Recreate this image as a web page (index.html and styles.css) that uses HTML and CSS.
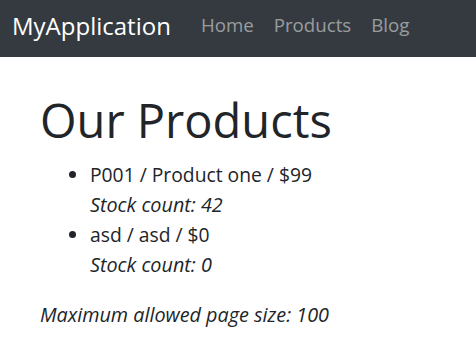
FILE: index.html
```html
<!DOCTYPE html>
<html>
<head>
<meta charset="utf-8">
<link rel="stylesheet" href="styles.css">
</head>
<body>
<nav class="navbar">
  <a class="brand" href="#">MyApplication</a>
  <ul class="nav">
    <li><a href="#">Home</a></li>
    <li><a href="#">Products</a></li>
    <li><a href="#">Blog</a></li>
  </ul>
</nav>
<main class="content">
  <h1 class="title">Our Products</h1>
  <ul class="products">
    <li>P001 / Product one / $99<br><em>Stock count: 42</em></li>
    <li>asd / asd / $0<br><em>Stock count: 0</em></li>
  </ul>
  <p class="note"><em>Maximum allowed page size: 100</em></p>
</main>
</body>
</html>
```
FILE: styles.css
```css
html, body {
  margin: 0;
  padding: 0;
}
body {
  font-family: "Open Sans", "Noto Sans", sans-serif;
  font-size: 19.3px;
  line-height: 30px;
  color: #212529;
  background: #fff;
}
em {
  font-size: 19.8px;
}
.navbar {
  height: 57px;
  background: #343a40;
  display: flex;
  align-items: center;
  padding: 0 12px;
  box-sizing: border-box;
}
.brand {
  color: #fff;
  text-decoration: none;
  font-size: 24px;
  margin-right: 30px;
  margin-top: -6px;
}
.nav {
  list-style: none;
  margin: 0;
  padding: 0;
  display: flex;
  gap: 20px;
  margin-top: -7px;
}
.nav a {
  color: rgba(255,255,255,.5);
  text-decoration: none;
  font-size: 18.7px;
}
.content {
  padding: 0 40px;
}
.title {
  font-weight: 400;
  font-size: 47px;
  line-height: 58px;
  margin: 34px 0 11px;
}
.products {
  margin: 0 0 20px;
  padding-left: 50px;
}
.note {
  margin: 0;
}
```
